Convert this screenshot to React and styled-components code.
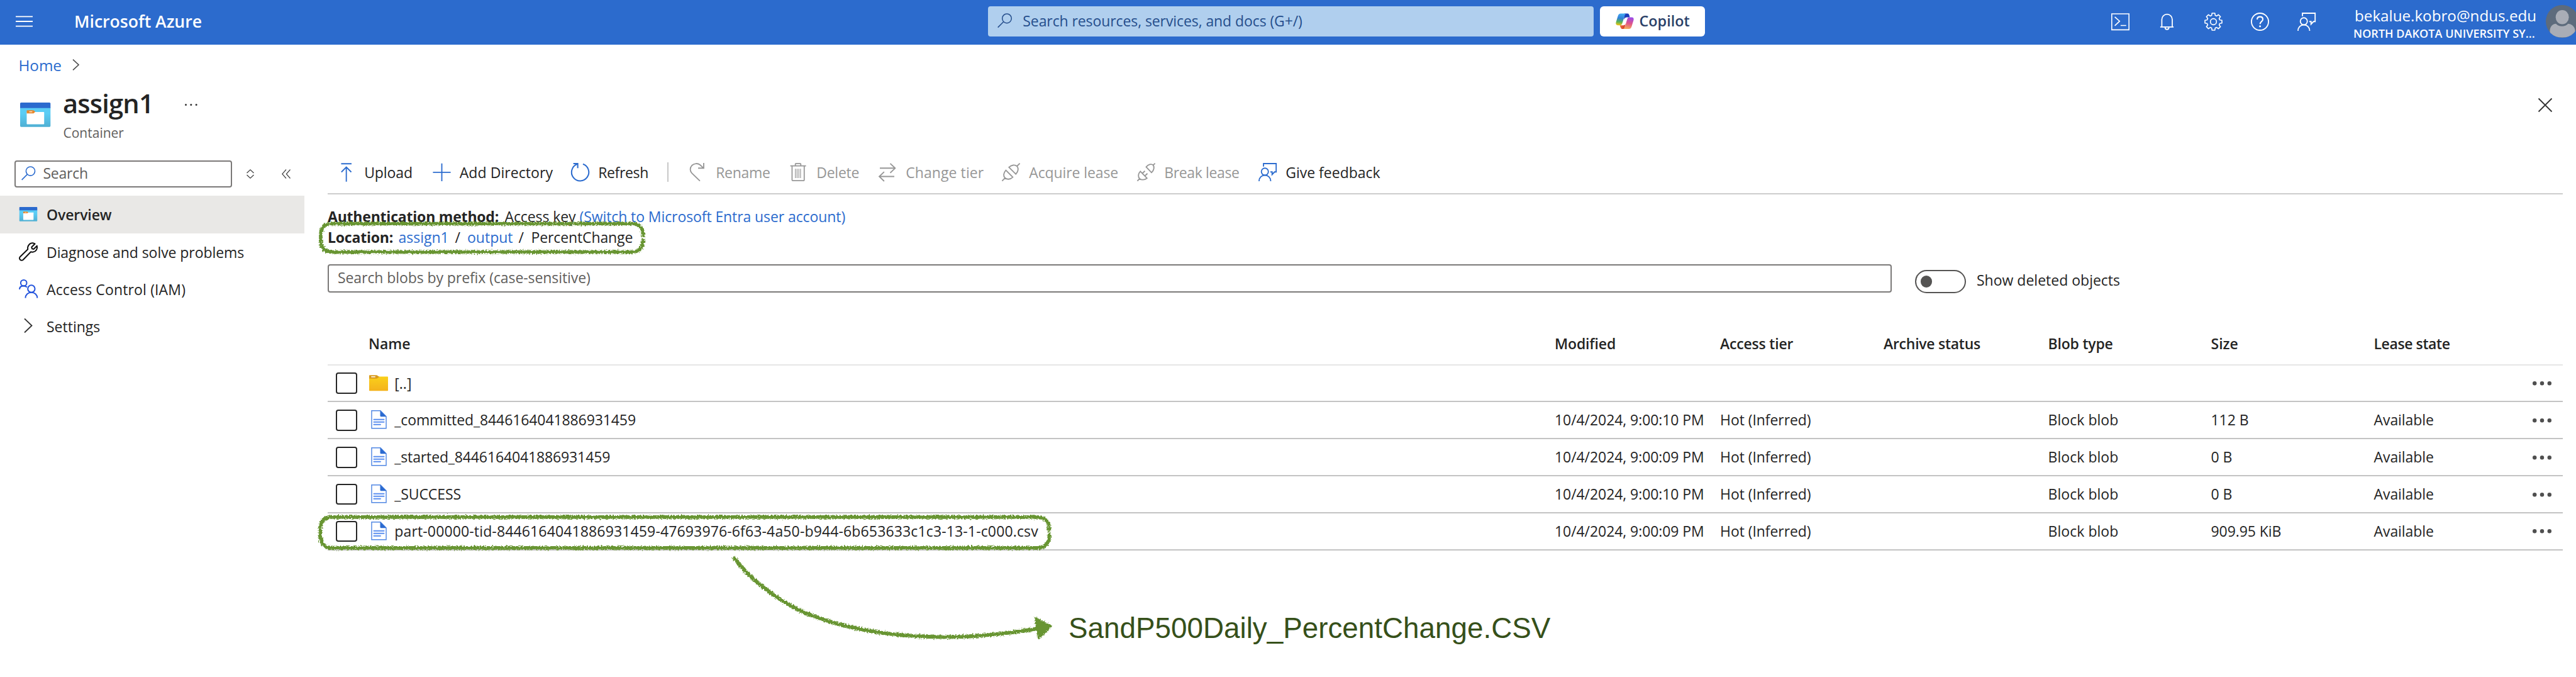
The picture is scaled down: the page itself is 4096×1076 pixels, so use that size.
import React from 'react';
import styled, { createGlobalStyle, css } from 'styled-components';

const color = {
  azure: '#2c6bcd',
  link: '#2b6bce',
  text: '#242424',
  subtle: '#5f5e5c',
  disabled: '#979797',
  green: '#679533',
};

const GlobalStyle = createGlobalStyle`
  *, *::before, *::after { box-sizing: border-box; }
  html, body { margin: 0; padding: 0; background: #fff; overflow: hidden; }
  svg { display: block; flex: none; overflow: visible; }
`;

const Page = styled.div`
  position: relative;
  width: 4096px;
  height: 1076px;
  overflow: hidden;
  background: #fff;
  color: ${color.text};
  font-family: 'Open Sans', 'Noto Sans', sans-serif;
  font-size: 23px;
  line-height: 33px;
  letter-spacing: -0.07px;
  white-space: nowrap;
`;

const Txt = styled.span`
  letter-spacing: ${(p) => (p.$ls != null ? `${p.$ls}px` : 'inherit')};
`;

/* ---------- top bar ---------- */
const TopBar = styled.header`
  display: flex;
  align-items: center;
  height: 71px;
  padding-bottom: 3px;
  background: ${color.azure};
  color: #fff;
  > * { flex: none; }
`;
const Brand = styled.div`
  display: flex;
  align-items: center;
  gap: 66px;
  width: 1571px;
  padding-left: 25px;
  font-size: 26.6px;
  font-weight: 600;
  letter-spacing: 0;
`;
const GlobalSearch = styled.div`
  display: flex;
  align-items: center;
  gap: 17px;
  width: 963px;
  height: 48px;
  padding: 0 15px 2px;
  border-radius: 4px;
  background: #b0cfee;
  color: #254e8c;
`;
const CopilotButton = styled.div`
  display: flex;
  align-items: center;
  gap: 9px;
  width: 167px;
  height: 48px;
  margin-left: 9.5px;
  padding: 0 0 1px 25px;
  border-radius: 6px;
  background: #fff;
  color: #2a3f68;
  font-size: 23.4px;
  font-weight: 600;
`;
const TopActions = styled.div`
  display: flex;
  align-items: center;
  gap: 45px;
  margin-left: 646.5px;
`;
const Account = styled.div`
  display: flex;
  flex-direction: column;
  width: 289px;
  margin-left: 60px;
  padding-top: 7px;
`;
const Email = styled.div`
  padding-left: 2px;
  font-size: 24.2px;
  line-height: 30px;
  letter-spacing: 0;
`;
const Tenant = styled.div`
  font-size: 18px;
  font-weight: 600;
  line-height: 26px;
  letter-spacing: 0.04px;
`;
const Avatar = styled.div`
  width: 51.5px;
  height: 51.5px;
  margin-left: 17px;
  border-radius: 50%;
  overflow: hidden;
  background: #5d6b7c;
`;

/* ---------- blade heading ---------- */
const Breadcrumb = styled.nav`
  display: flex;
  align-items: center;
  gap: 17px;
  height: 64px;
  padding-left: 29.5px;
  color: ${color.link};
  font-size: 24.3px;
`;
const Heading = styled.div`
  display: flex;
  height: 105px;
  padding: 4px 38.5px 0 32px;
`;
const HeadingIcon = styled.div`
  width: 68px;
  padding-top: 23.5px;
`;
const TitleBlock = styled.div`
  width: 194px;
`;
const Title = styled.h1`
  margin: 0;
  font-size: 41.6px;
  font-weight: 600;
  line-height: 50px;
  letter-spacing: -0.8px;
`;
const Subtitle = styled.div`
  padding-top: 7px;
  padding-left: 0.5px;
  color: ${color.subtle};
  font-size: 21px;
  line-height: 30px;
  letter-spacing: 0;
`;
const HeadingActions = styled.div`
  display: flex;
  flex: 1;
  justify-content: space-between;
  align-items: center;
  height: 55px;
`;

/* ---------- layout ---------- */
const Columns = styled.div`
  display: flex;
`;
const Sidebar = styled.aside`
  width: 484px;
  padding-top: 14.5px;
`;
const SideTools = styled.div`
  display: flex;
  align-items: center;
  margin-bottom: 13px;
  padding-left: 23px;
`;
const SideSearch = styled.div`
  display: flex;
  align-items: center;
  gap: 12px;
  width: 346px;
  height: 43.5px;
  margin-right: 23px;
  padding: 0 9px 2px;
  border: 2px solid #7b7978;
  border-radius: 4px;
  color: ${color.subtle};
`;
const CollapseIcon = styled.svg`
  margin-left: 44px;
`;
const SideItem = styled.div`
  display: flex;
  align-items: center;
  height: ${(p) => (p.$active ? '59.5px' : '59px')};
  padding-left: 30px;
  font-weight: ${(p) => (p.$active ? 600 : 400)};
  background: ${(p) => (p.$active ? '#e9e8e6' : 'transparent')};
  svg { width: 30px; }
`;
const SideLabel = styled.span`
  margin-left: 14px;
  padding-top: 2px;
  letter-spacing: ${(p) => p.$ls || 0}px;
`;

const Main = styled.main`
  width: 3554px;
  margin-left: 37px;
`;
const Toolbar = styled.div`
  display: flex;
  align-items: center;
  height: 69px;
  padding-left: 15px;
  border-bottom: 2px solid #cdcdcd;
`;
const Tool = styled.div`
  display: flex;
  align-items: center;
  gap: 14.2px;
  width: ${(p) => p.$w}px;
  letter-spacing: ${(p) => p.$ls || 0}px;
  color: ${(p) => (p.$disabled ? color.disabled : color.text)};
  svg { color: ${(p) => (p.$disabled ? color.disabled : color.link)}; }
  span { padding-top: 2px; }
`;
const Divider = styled.span`
  width: 2px;
  height: 31px;
  margin-right: 32px;
  background: #c8c8c8;
`;
const Info = styled.div`
  display: flex;
  margin-top: ${(p) => p.$top || 0}px;
`;
const InfoLabel = styled.b`
  width: ${(p) => p.$w}px;
  font-weight: 700;
  letter-spacing: -0.2px;
`;
const InfoPart = styled.span`
  width: ${(p) => p.$w}px;
  letter-spacing: ${(p) => p.$ls || 0}px;
  color: ${(p) => (p.$link ? color.link : 'inherit')};
`;
const FilterRow = styled.div`
  display: flex;
  height: 46px;
  margin: 26px 0 45.6px;
`;
const PrefixInput = styled.div`
  width: 2487px;
  height: 44.5px;
  padding: 3px 14px;
  border: 2px solid #7b7978;
  border-radius: 4px;
  color: ${color.subtle};
`;
const ToggleField = styled.div`
  display: flex;
  align-items: center;
  gap: 17px;
  height: 37.5px;
  margin: 8.5px 0 0 36.5px;
`;
const Toggle = styled.span`
  display: flex;
  align-items: center;
  width: 81.5px;
  height: 37.5px;
  padding-left: 7px;
  border: 2px solid #555453;
  border-radius: 19px;
  &::before {
    content: '';
    width: 18.5px;
    height: 18.5px;
    border-radius: 50%;
    background: #555453;
  }
`;
const ToggleLabel = styled.span`
  margin-top: -4px;
  letter-spacing: 0;
`;

const gridColumns = css`
  display: grid;
  grid-template-columns: 65px 1886px 263px 260px 261.5px 259px 259px 200px 1fr;
  align-items: center;
`;
const TableHead = styled.div`
  ${gridColumns}
  height: 69px;
  padding-top: 2px;
  border-bottom: 2px solid #e6e6e6;
  font-weight: 600;
`;
const TableRow = styled.div`
  ${gridColumns}
  height: 58.9px;
  border-bottom: 2px solid #c3c3c3;
`;
const Checkbox = styled.span`
  width: 33.5px;
  height: 33.5px;
  margin-left: 13px;
  border: 2px solid #262626;
  border-radius: 4px;
`;
const NameCell = styled.div`
  display: flex;
  align-items: center;
  letter-spacing: ${(p) => p.$ls || 0}px;
`;
const FileIconBox = styled.span`
  display: flex;
  align-items: center;
  width: 41.3px;
  height: 34px;
  padding-left: ${(p) => (p.$folder ? '1px' : '3.5px')};
  padding-bottom: ${(p) => (p.$folder ? '1px' : '2px')};
`;
const More = styled.span`
  justify-self: end;
  margin-right: 18px;
`;

/* ---------- annotations ---------- */
const Overlay = styled.div`
  position: absolute;
  inset: 0;
  pointer-events: none;
`;
const Caption = styled.div`
  position: absolute;
  left: 1699px;
  top: 976px;
  color: #36501a;
  font-family: 'Liberation Sans', Arial, sans-serif;
  font-size: 45.8px;
  line-height: 46px;
  letter-spacing: 0;
`;

/* ---------- icons ---------- */
const Icon = ({ sw = 2, children }) => (
  <svg width="29" height="29" viewBox="0 0 36 36" fill="none" stroke="currentColor" strokeWidth={sw}>
    {children}
  </svg>
);

const SearchIcon = ({ stroke, sw = 2, size = 22.5 }) => (
  <svg width={size} height={size} viewBox="0 0 28 28" fill="none" stroke={stroke} strokeWidth={sw}>
    <circle cx="18" cy="10" r="8.8" />
    <path d="M11.7 16.3 0.8 27.2" />
  </svg>
);

const ContainerIcon = ({ w, id }) => (
  <svg width={w} height={w * 0.8} viewBox="0 0 60 48">
    <defs>
      <linearGradient id={id} x1="0" y1="0" x2="0" y2="1">
        <stop offset="0.3" stopColor="#5bcdf5" />
        <stop offset="1" stopColor="#4fafd3" />
      </linearGradient>
    </defs>
    <path d="M0 10h60v36a2 2 0 0 1-2 2H2a2 2 0 0 1-2-2z" fill={`url(#${id})`} />
    <path d="M2 0h56a2 2 0 0 1 2 2v9H0V2a2 2 0 0 1 2-2z" fill="#2b6ace" />
    <path d="M13 18.5h33.5a1 1 0 0 1 1 1v22.5a1 1 0 0 1-1 1H14a1 1 0 0 1-1-1z" fill="#fff" />
    <path d="M14 15.3h12.5l3.5 3-3.5 3H13v-5a1 1 0 0 1 1-1z" fill="#e8872b" />
    <path d="M18 18.3h6" stroke="#fff" strokeWidth="1.3" />
  </svg>
);

const FeedbackIcon = () => (
  <Icon sw={2.3}>
    <path d="M10 7V1.2h25v16.5h-3.2L27 22.8v-5.1h-3.5" />
    <circle cx="12.7" cy="17.2" r="6.9" />
    <path d="M1.2 36c0-7 5-11.8 11.5-11.8S24.2 29 24.2 36" />
  </Icon>
);

const CopilotIcon = () => (
  <svg width="29" height="25.5" viewBox="0 0 36 32">
    <defs>
      <linearGradient id="cpL" x1="0.4" y1="0" x2="0.3" y2="1">
        <stop offset="0" stopColor="#45aaf2" />
        <stop offset="0.4" stopColor="#2f80d9" />
        <stop offset="0.72" stopColor="#5cb356" />
        <stop offset="1" stopColor="#f0c414" />
      </linearGradient>
      <linearGradient id="cpR" x1="0.6" y1="0" x2="0.4" y2="1">
        <stop offset="0" stopColor="#9a4bea" />
        <stop offset="0.5" stopColor="#e0538a" />
        <stop offset="1" stopColor="#f6ad58" />
      </linearGradient>
      <linearGradient id="cpO" x1="0" y1="0" x2="1" y2="0.4">
        <stop offset="0" stopColor="#f08337" />
        <stop offset="1" stopColor="#d6382c" />
      </linearGradient>
    </defs>
    <path d="M17 .5h6.5c2.6 0 3.5 2.5 4.5 7.5h-5.5c-3.5 0-5 2-6 5z" fill="#1c3cb9" />
    <path d="M8 24h7c2.5 0 4-1 5-4l-3 11.5h-3.5c-3 0-3.8-3-5.5-7.5z" fill="url(#cpO)" />
    <path d="M10 .5h12c-2.4 0-3.6 2-4.5 5l-4.200 13.500c-1 3.500-2.300 5-5.300 5H4c-3.200 0-4.500-2.200-3.500-6L4.500 5C5.500 2 7 .5 10 .5z" fill="url(#cpL)" />
    <path d="M26.500 8H32c3.200 0 4.500 2.200 3.500 6l-4 13c-1 3-2.500 4.500-5.500 4.500H14c2.400 0 3.600-2 4.500-5L22.500 13c1-3.500 1.800-5 4-5z" fill="url(#cpR)" />
  </svg>
);

const FolderIcon = () => (
  <svg width="30" height="25.5" viewBox="0 0 37 31">
    <defs>
      <linearGradient id="fold" x1="0" y1="0" x2="0" y2="1">
        <stop offset="0" stopColor="#fad01a" />
        <stop offset="1" stopColor="#f4b21d" />
      </linearGradient>
    </defs>
    <path d="M0 3h36a1 1 0 0 1 1 1v26a1 1 0 0 1-1 1H1a1 1 0 0 1-1-1z" fill="url(#fold)" />
    <path d="M1 0h14l5 3.5-5 3.5H0V1a1 1 0 0 1 1-1z" fill="#d99a1c" />
    <path d="M4 3.3h8" stroke="#fff" strokeWidth="1.8" />
  </svg>
);

const FileIcon = () => (
  <svg width="25" height="29.5" viewBox="0 0 31 37">
    <path d="M1 1h17.5L30 12.5V36H1z" fill="#fff" stroke="#4f86e3" strokeWidth="1.8" />
    <path d="M18 .5 30.5 13H20a2 2 0 0 1-2-2z" fill="#2b6ad0" />
    <path d="M5.5 18.5h20M5.5 23.5h20M5.5 28.5h13" stroke="#5b8ff0" strokeWidth="2.6" strokeLinecap="round" />
  </svg>
);

const Dots = ({ r, gap, fill }) => (
  <svg width={gap * 2 + r * 2} height={r * 2} fill={fill}>
    <circle cx={r} cy={r} r={r} />
    <circle cx={r + gap} cy={r} r={r} />
    <circle cx={r + gap * 2} cy={r} r={r} />
  </svg>
);

const gearPath = (() => {
  const pts = [];
  for (let i = 0; i < 8; i += 1) {
    const base = (i * Math.PI) / 4;
    [[-0.27, 13], [-0.17, 17], [0.17, 17], [0.27, 13]].forEach(([a, r]) => {
      pts.push(`${(18 + r * Math.sin(base + a)).toFixed(2)} ${(18 - r * Math.cos(base + a)).toFixed(2)}`);
    });
  }
  return `M${pts.join('L')}Z`;
})();

const UploadIcon = () => (
  <Icon sw={2.3}>
    <path d="M8 1.5h20.5M18.2 37V8.5M8.5 18l9.7-9.8L28 18" />
  </Icon>
);
const PlusIcon = () => (
  <Icon sw={2.3}>
    <path d="M18 1v35M.5 18.5h35" />
  </Icon>
);
const RefreshIcon = () => (
  <Icon sw={2.5}>
    <path d="M23.5 2.2A17 17 0 1 1 12 2.4M4.5 1.3h8.7v8.9" />
  </Icon>
);
const RenameIcon = () => (
  <Icon sw={2.3}>
    <path d="M22.3 35.5 6.5 20.3C2.3 16 2 9.5 6.3 5 11 .3 18 .3 22.5 3.7l6.8 6.4M29.7 0v10.3h-11" />
  </Icon>
);
const DeleteIcon = () => (
  <Icon sw={2.2}>
    <path d="M2 5.8h31M12 5.5V2.3A1.3 1.3 0 0 1 13.3 1h8A1.3 1.3 0 0 1 22.7 2.3v3.2M5.5 6v27.5a1.5 1.5 0 0 0 1.5 1.5h21a1.5 1.5 0 0 0 1.5-1.5V6" />
    <path d="M12 11.5v18.3M15.4 11.5v18.3M18.8 11.5v18.3M22.2 11.5v18.3" strokeWidth="1.5" />
  </Icon>
);
const ChangeTierIcon = () => (
  <Icon sw={2.3}>
    <path d="M2.5 10.3h30M23 1l9.7 9.3-9.7 9.2M31 26.7H1.5M11 17.5l-9.7 9.2L11 36" />
  </Icon>
);
const AcquireIcon = () => (
  <Icon sw={2.3}>
    <path d="M.5 35.5 6 30M35.5.7 30 6.2M8 14.5 21.5 28c-5 5-11.5 5-15.3 1.5C2.5 26 3 19.5 8 14.5zM14 8.5 27.5 22c5-5 6-11.5 2.5-15.5C26 3 19 3.5 14 8.5z" />
  </Icon>
);
const BreakIcon = () => (
  <Icon sw={2.3}>
    <path d="M.5 35.5 5 31M35.5.7 32 4.3M18 8l10.5 11c5-4.5 6-10.8 3.5-14.5-4-3.5-10-1.5-14 3.5zM6.5 16.5 19.5 30c-5 4-11 4-14.5 1C1.5 27.5 2 21 6.5 16.5zM10.500 20.500l5-4.700M15.500 25.500l5-4.700" />
  </Icon>
);

const TerminalIcon = () => (
  <Icon sw={2}>
    <path d="M1 2.5h34v31.5H1zM7 8.5l9.5 8.5L7 26M18.5 25.5h11" />
  </Icon>
);
const BellIcon = () => (
  <Icon sw={2.2}>
    <path d="M4.8 28.5h26.400M8 28.500V13.500a10.300 10.300 0 0 1 20.600 0v15M14.500 29.500a3.700 3.700 0 0 0 7.400 0" />
  </Icon>
);
const GearIcon = () => (
  <Icon sw={2}>
    <path d={gearPath} strokeLinejoin="round" />
    <circle cx="18" cy="18" r="6" />
  </Icon>
);
const HelpIcon = () => (
  <Icon sw={2.3}>
    <circle cx="18" cy="18" r="16.8" />
    <path d="M12.5 13.5c0-3.5 2.5-5.3 5.6-5.3 3.2 0 5.5 2 5.5 5 0 4.5-5.4 4.7-5.4 9.5" strokeWidth="2.6" />
    <circle cx="18.1" cy="27" r="1.9" fill="currentColor" stroke="none" />
  </Icon>
);

const WrenchIcon = () => (
  <svg width="30" height="30" viewBox="0 0 37 37" fill="none" stroke="#111" strokeWidth="2.5" strokeLinejoin="round">
    <path d="M31.5 3 25 9.5l.8 3.2 3.2.8L35.5 7c1.5 5.5-1.5 11-7.5 12.2-1.5.3-3 .2-4.5-.3L8.5 34.2c-1.8 1.8-4.3 1.8-6 .1s-1.7-4.3.1-6L17.5 14c-1.2-6.5 3.5-13 10.5-12.3z" />
  </svg>
);
const PeopleIcon = () => (
  <svg width="30" height="30" viewBox="0 0 37 37" fill="none" stroke="#2454dc" strokeWidth="2.5">
    <circle cx="9.5" cy="7" r="5.9" />
    <path d="M1.2 19.5C1.5 15 5 12.8 9.5 12.8c2.5 0 4.8.9 6.5 2.7" />
    <circle cx="24.5" cy="18.5" r="7" />
    <path d="M12.8 36.5c.3-6.5 5-11 11.7-11s11.4 4.5 11.7 11" />
  </svg>
);
const ChevronIcon = ({ w, h, sw = 2 }) => (
  <svg width={w} height={h} viewBox={`0 0 ${w} ${h}`} fill="none" stroke="#4a4a4a" strokeWidth={sw}>
    <path d={`M1 .7 L${w - 1} ${h / 2} L1 ${h - 0.7}`} />
  </svg>
);

/* ---------- data ---------- */
const tools = [
  { label: 'Upload', icon: UploadIcon, w: 151.5, ls: -0.1 },
  { label: 'Add Directory', icon: PlusIcon, w: 220.5, ls: 0.07 },
  { label: 'Refresh', icon: RefreshIcon, w: 153, ls: -0.35 },
  { divider: true },
  { label: 'Rename', icon: RenameIcon, w: 160, ls: -0.28, disabled: true },
  { label: 'Delete', icon: DeleteIcon, w: 142, ls: -0.24, disabled: true },
  { label: 'Change tier', icon: ChangeTierIcon, w: 196, ls: 0.08, disabled: true },
  { label: 'Acquire lease', icon: AcquireIcon, w: 215, ls: -0.1, disabled: true },
  { label: 'Break lease', icon: BreakIcon, w: 193, ls: -0.36, disabled: true },
  { label: 'Give feedback', icon: FeedbackIcon, w: 220, ls: 0 },
];

const headers = [
  ['Name', 0], ['Modified', -0.15], ['Access tier', -0.2], ['Archive status', -0.26],
  ['Blob type', -0.2], ['Size', 0], ['Lease state', -0.4],
];

const rows = [
  { name: '[..]', folder: true },
  { name: '_committed_8446164041886931459', ls: -0.1, modified: '10/4/2024, 9:00:10 PM', size: '112 B' },
  { name: '_started_8446164041886931459', ls: -0.13, modified: '10/4/2024, 9:00:09 PM', size: '0 B' },
  { name: '_SUCCESS', ls: -0.1, modified: '10/4/2024, 9:00:10 PM', size: '0 B' },
  {
    name: 'part-00000-tid-8446164041886931459-47693976-6f63-4a50-b944-6b653633c1c3-13-1-c000.csv',
    ls: 0.14, modified: '10/4/2024, 9:00:09 PM', size: '909.95 KiB',
  },
];

/* Crayon frame: starts and ends halfway down the right side. */
const framePath = (x1, y1, x2, y2, r) => {
  const m = (y1 + y2) / 2;
  return `M${x2} ${m + 1.5}V${y2 - r}Q${x2 - 2} ${y2 - 1} ${x2 - r} ${y2}H${x1 + r}Q${x1 + 2} ${y2 - 1} ${x1} ${y2 - r}V${y1 + r}Q${x1 + 2} ${y1 + 1} ${x1 + r} ${y1}H${x2 - r}Q${x2 - 2} ${y1 + 1} ${x2} ${y1 + r}V${m - 1.5}`;
};

const Annotations = () => (
  <Overlay>
    <svg width="4096" height="1076" viewBox="0 0 5092 1338" preserveAspectRatio="none" fill="none" stroke={color.green}>
      <defs>
        <filter id="crayon" filterUnits="userSpaceOnUse" x="600" y="400" width="1600" height="920">
          <feTurbulence type="fractalNoise" baseFrequency="0.35" numOctaves="2" seed="4" result="n" />
          <feDisplacementMap in="SourceGraphic" in2="n" scale="8" xChannelSelector="R" yChannelSelector="G" />
        </filter>
      </defs>
      <g filter="url(#crayon)">
        <path d={framePath(634, 442, 1271, 498, 20)} strokeWidth="7" />
        <path d={framePath(633, 1022, 2074, 1083, 22)} strokeWidth="7" />
        <path d="M1450 1101C1476 1137 1534 1188 1596 1213C1720 1262 1880 1272 2052 1242" strokeWidth="7.5" />
        <path d="M2046 1221 2078 1237 2053 1262z" fill={color.green} strokeWidth="3" strokeLinejoin="round" />
      </g>
    </svg>
    <Caption>SandP500Daily_PercentChange.CSV</Caption>
  </Overlay>
);

export default function App() {
  return (
    <Page>
      <GlobalStyle />
      <TopBar>
        <Brand>
          <svg width="27" height="18" stroke="#fff" strokeWidth="1.8">
            <path d="M0 1.4h27M0 9h27M0 16.6h27" />
          </svg>
          <span>Microsoft Azure</span>
        </Brand>
        <GlobalSearch>
          <SearchIcon stroke="#254e8c" sw={1.8} size={23.3} />
          <Txt $ls={-0.09}>Search resources, services, and docs (G+/)</Txt>
        </GlobalSearch>
        <CopilotButton>
          <CopilotIcon />
          <Txt $ls={0}>Copilot</Txt>
        </CopilotButton>
        <TopActions>
          <TerminalIcon />
          <BellIcon />
          <GearIcon />
          <HelpIcon />
          <FeedbackIcon />
        </TopActions>
        <Account>
          <Email>bekalue.kobro@ndus.edu</Email>
          <Tenant>NORTH DAKOTA UNIVERSITY SY...</Tenant>
        </Account>
        <Avatar>
          <svg width="51.5" height="51.5" viewBox="0 0 64 64" fill="#a9adb6">
            <path d="M8 64V52C8 42 14 37 20 37c3 3 7 5 12 5s9-2 12-5c6 0 14 5 14 15v12z" />
            <ellipse cx="32.5" cy="24" rx="13" ry="14" />
          </svg>
        </Avatar>
      </TopBar>

      <Breadcrumb>
        <span>Home</span>
        <ChevronIcon w={11} h={18} sw={1.6} />
      </Breadcrumb>

      <Heading>
        <HeadingIcon>
          <ContainerIcon w={48.3} id="bigContainer" />
        </HeadingIcon>
        <TitleBlock>
          <Title>assign1</Title>
          <Subtitle>Container</Subtitle>
        </TitleBlock>
        <HeadingActions>
          <Dots r={1.5} gap={8.3} fill="#333" />
          <svg width="22" height="22" stroke="#333" strokeWidth="1.8">
            <path d="M.5.5l21 21M21.5.5l-21 21" />
          </svg>
        </HeadingActions>
      </Heading>

      <Columns>
        <Sidebar>
          <SideTools>
            <SideSearch>
              <SearchIcon stroke={color.link} />
              <Txt $ls={-0.25}>Search</Txt>
            </SideSearch>
            <svg width="12" height="15" fill="none" stroke="#444" strokeWidth="1.3">
              <path d="M.5 6 6 .8 11.5 6M.5 9 6 14.2 11.5 9" />
            </svg>
            <CollapseIcon width="14" height="15" fill="none" stroke="#444" strokeWidth="1.2">
              <path d="M7 .5.8 7.5 7 14.5M13.5.5 7.3 7.5l6.2 7" />
            </CollapseIcon>
          </SideTools>
          <SideItem $active>
            <ContainerIcon w={28.5} id="smallContainer" />
            <SideLabel $ls={-0.1}>Overview</SideLabel>
          </SideItem>
          <SideItem>
            <WrenchIcon />
            <SideLabel $ls={-0.06}>Diagnose and solve problems</SideLabel>
          </SideItem>
          <SideItem>
            <PeopleIcon />
            <SideLabel $ls={0.14}>Access Control (IAM)</SideLabel>
          </SideItem>
          <SideItem>
            <svg width="30" height="24" fill="none" stroke="#333" strokeWidth="1.8">
              <path d="M9 .5 20.5 11.5 9 22.5" />
            </svg>
            <SideLabel>Settings</SideLabel>
          </SideItem>
        </Sidebar>

        <Main>
          <Toolbar>
            {tools.map((t) => (t.divider ? <Divider key="divider" /> : (
              <Tool key={t.label} $w={t.w} $ls={t.ls} $disabled={t.disabled}>
                <t.icon />
                <span>{t.label}</span>
              </Tool>
            )))}
          </Toolbar>

          <Info $top={19}>
            <InfoLabel $w={281.5}>Authentication method:</InfoLabel>
            <InfoPart $w={119} $ls={-0.1}>Access key</InfoPart>
            <InfoPart $w={430} $link $ls={-0.09}>(Switch to Microsoft Entra user account)</InfoPart>
          </Info>
          <Info>
            <InfoLabel $w={112.5}>Location:</InfoLabel>
            <InfoPart $w={90} $link>assign1</InfoPart>
            <InfoPart $w={19.5}>/</InfoPart>
            <InfoPart $w={81.5} $link>output</InfoPart>
            <InfoPart $w={20}>/</InfoPart>
            <InfoPart $ls={-0.12}>PercentChange</InfoPart>
          </Info>

          <FilterRow>
            <PrefixInput>
              <Txt $ls={-0.08}>Search blobs by prefix (case-sensitive)</Txt>
            </PrefixInput>
            <ToggleField>
              <Toggle />
              <ToggleLabel>Show deleted objects</ToggleLabel>
            </ToggleField>
          </FilterRow>

          <TableHead>
            <span />
            {headers.map(([label, ls]) => <Txt key={label} $ls={ls}>{label}</Txt>)}
          </TableHead>
          {rows.map((r) => (
            <TableRow key={r.name}>
              <Checkbox />
              <NameCell $ls={r.ls}>
                <FileIconBox $folder={r.folder}>{r.folder ? <FolderIcon /> : <FileIcon />}</FileIconBox>
                <span>{r.name}</span>
              </NameCell>
              <Txt>{r.modified}</Txt>
              <Txt>{r.modified && 'Hot (Inferred)'}</Txt>
              <span />
              <Txt $ls={0.05}>{r.modified && 'Block blob'}</Txt>
              <Txt>{r.size}</Txt>
              <Txt>{r.modified && 'Available'}</Txt>
              <More>
                <Dots r={3.2} gap={11.8} fill="#4f4f4f" />
              </More>
            </TableRow>
          ))}
        </Main>
      </Columns>

      <Annotations />
    </Page>
  );
}
